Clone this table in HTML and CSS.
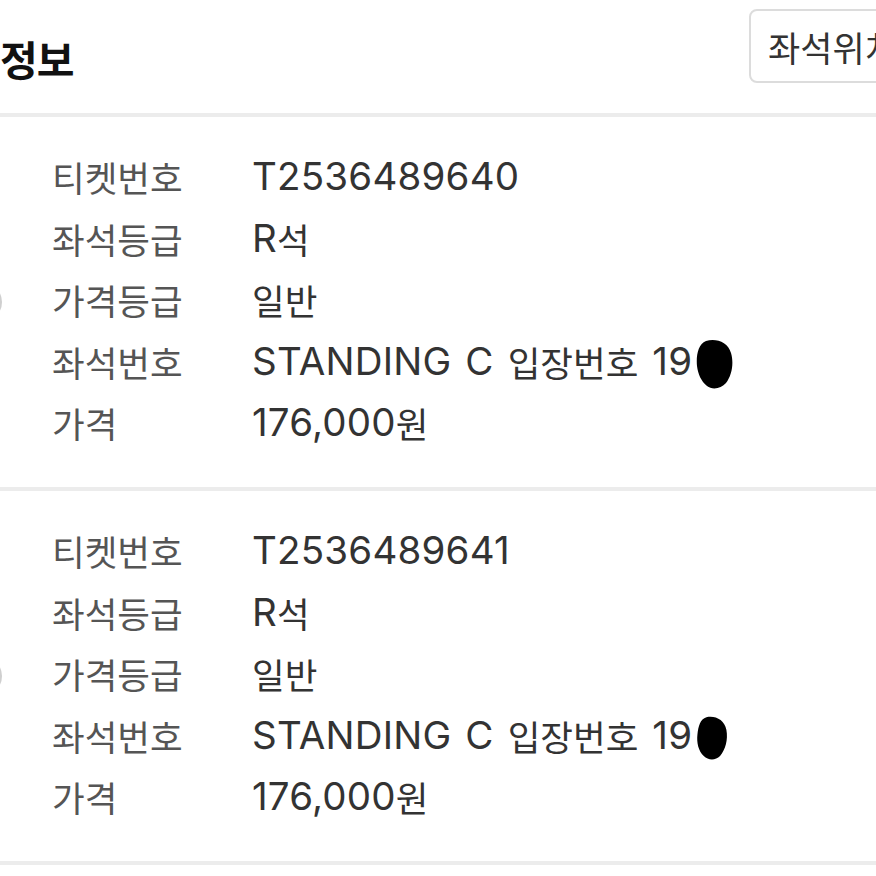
FILE: index.html
```html
<!DOCTYPE html>
<html lang="ko">
<head>
<meta charset="utf-8">
<link rel="stylesheet" href="styles.css">
</head>
<body>
<div class="page">
  <header class="header">
    <h1 class="title">정보</h1>
    <button class="seat-btn">좌석위치</button>
  </header>
  <div class="divider"></div>
  <section class="ticket">
    <span class="radio"></span>
    <dl class="rows">
      <div class="row"><dt>티켓번호</dt><dd><span class="lat">T2536489640</span></dd></div>
      <div class="row"><dt>좌석등급</dt><dd><span class="lat">R</span>석</dd></div>
      <div class="row"><dt>가격등급</dt><dd>일반</dd></div>
      <div class="row"><dt>좌석번호</dt><dd><span class="lat">STANDING C </span>입장번호<span class="lat"> 19</span><svg class="blob" viewBox="0 0 42 50" width="42" height="50"><path d="M14 2 C24 -1 36 3 39 14 C42 24 40 36 34 44 C29 50 20 51 15 47 C9 42 6 35 5 27 C4 17 6 5 14 2 Z" fill="#000"/></svg></dd></div>
      <div class="row"><dt>가격</dt><dd><span class="lat">176,000</span>원</dd></div>
    </dl>
  </section>
  <div class="divider"></div>
  <section class="ticket">
    <span class="radio"></span>
    <dl class="rows">
      <div class="row"><dt>티켓번호</dt><dd><span class="lat">T2536489641</span></dd></div>
      <div class="row"><dt>좌석등급</dt><dd><span class="lat">R</span>석</dd></div>
      <div class="row"><dt>가격등급</dt><dd>일반</dd></div>
      <div class="row"><dt>좌석번호</dt><dd><span class="lat">STANDING C </span>입장번호<span class="lat"> 19</span><svg class="blob blob2" viewBox="0 0 42 50" width="38" height="48"><path d="M16 2 C26 0 36 5 38 16 C40 27 37 38 31 45 C26 50 18 50 13 45 C7 39 5 30 6 21 C7 12 9 4 16 2 Z" fill="#000"/></svg></dd></div>
      <div class="row"><dt>가격</dt><dd><span class="lat">176,000</span>원</dd></div>
    </dl>
  </section>
  <div class="divider"></div>
</div>
</body>
</html>
```
FILE: styles.css
```css
* { box-sizing: border-box; }
html, body { margin: 0; padding: 0; background: #fff; }
body {
  font-family: "Noto Sans CJK KR", "Noto Sans", sans-serif;
  color: #333;
}
.page {
  width: 876px;
  height: 876px;
  overflow: hidden;
}
.header {
  display: flex;
  align-items: flex-start;
  height: 113px;
}
.title {
  margin: 32px 0 0 0;
  font-size: 41px;
  font-weight: 700;
  line-height: 52px;
  color: #111;
  letter-spacing: -1px;
}
.seat-btn {
  margin: 9px -70px 0 auto;
  height: 74px;
  width: 197px;
  padding: 0 0 0 17px;
  text-align: left;
  background: #fff;
  border: 2px solid #dcdcdc;
  border-radius: 8px;
  font-family: "Noto Sans CJK KR", sans-serif;
  font-size: 35px;
  color: #333;
  white-space: nowrap;
  overflow: hidden;
}
.divider {
  height: 4px;
  background: #ececec;
}
.ticket {
  display: flex;
  align-items: center;
  height: 370px;
}
.radio {
  flex: none;
  width: 40px;
  height: 40px;
  margin-left: -38px;
  border: 2px solid #cfcfcf;
  border-radius: 50%;
}
.rows {
  margin: 0 0 4px 50px;
  padding: 0;
}
.row {
  display: flex;
  height: 61.5px;
  line-height: 61.5px;
  align-items: center;
}
dt {
  width: 200px;
  font-size: 35.5px;
  color: #555;
}
dd {
  margin: 0;
  font-size: 35.5px;
  color: #333;
  white-space: nowrap;
  display: flex;
  align-items: center;
}
.lat {
  font-family: "Inter", "Noto Sans", sans-serif;
  font-size: 38.5px;
  white-space: pre;
  letter-spacing: 0.2px;
  word-spacing: 3px;
}
.blob {
  display: block;
  margin-left: 0;
  margin-top: 4px;
}
.blob2 { margin-left: 0; }
```
